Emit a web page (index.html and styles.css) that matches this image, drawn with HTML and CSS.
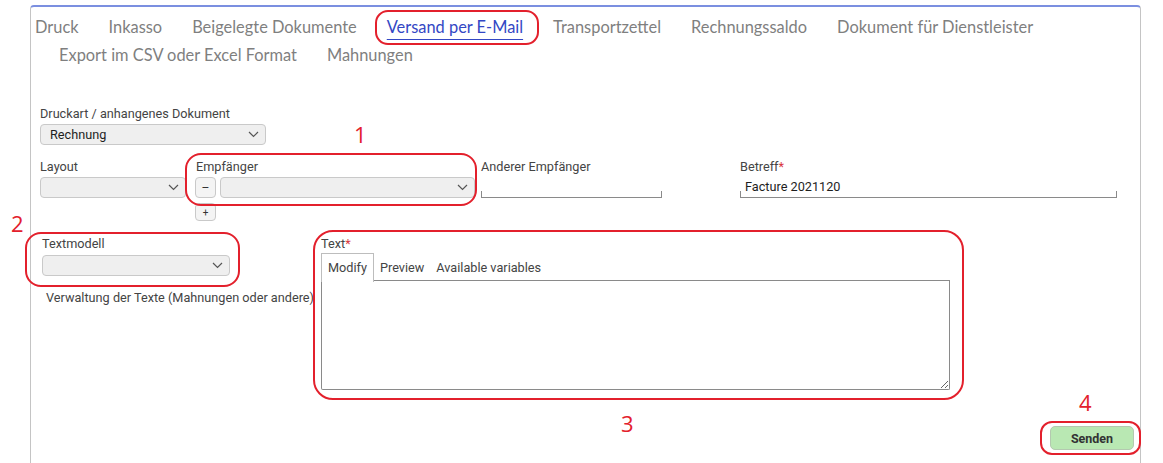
FILE: index.html
```html
<!DOCTYPE html>
<html lang="de">
<head>
  <meta charset="UTF-8" />
  <title>Versand per E-Mail</title>
  <link rel="stylesheet" href="styles.css">
</head>
<body>
<div class="page">

  <div class="panel">
    <!-- Reiter oben -->
    <nav class="tabs">
      <span class="tab">Druck</span>
      <span class="tab">Inkasso</span>
      <span class="tab">Beigelegte Dokumente</span>
      <span class="tab active">Versand per E-Mail</span>
      <span class="tab">Transportzettel</span>
      <span class="tab">Rechnungssaldo</span>
      <span class="tab">Dokument für Dienstleister</span>
      <span class="tab">Export im CSV oder Excel Format</span>
      <span class="tab">Mahnungen</span>
    </nav>

    <div class="form">
      <div class="row row-a">
        <div class="field f-druckart">
          <label>Druckart / anhangenes Dokument</label>
          <div class="select"><span>Rechnung</span>
            <svg width="11" height="7" viewBox="0 0 11 7"><path d="M1 1l4.5 4.5L10 1" fill="none" stroke="#555" stroke-width="1.2"/></svg>
          </div>
        </div>
      </div>

      <div class="row row-b">
        <div class="field f-layout">
          <label>Layout</label>
          <div class="select"><span></span>
            <svg width="11" height="7" viewBox="0 0 11 7"><path d="M1 1l4.5 4.5L10 1" fill="none" stroke="#555" stroke-width="1.2"/></svg>
          </div>
        </div>
        <div class="field f-empf">
          <label>Empfänger</label>
          <div class="empf-line">
            <button class="mini">–</button>
            <div class="select"><span></span>
              <svg width="11" height="7" viewBox="0 0 11 7"><path d="M1 1l4.5 4.5L10 1" fill="none" stroke="#555" stroke-width="1.2"/></svg>
            </div>
          </div>
          <button class="mini plus">+</button>
        </div>
        <div class="field f-anderer">
          <label>Anderer Empfänger</label>
          <div class="line-input"></div>
        </div>
        <div class="field f-betreff">
          <label>Betreff<span class="req">*</span></label>
          <div class="line-input">Facture 2021120</div>
        </div>
      </div>

      <div class="row row-c">
        <div class="col-model">
          <label>Textmodell</label>
          <div class="select"><span></span>
            <svg width="11" height="7" viewBox="0 0 11 7"><path d="M1 1l4.5 4.5L10 1" fill="none" stroke="#555" stroke-width="1.2"/></svg>
          </div>
          <p class="hint">Verwaltung der Texte (Mahnungen oder andere)</p>
        </div>
        <div class="col-text">
          <label>Text<span class="req">*</span></label>
          <div class="editor-tabs">
            <span class="etab current">Modify</span>
            <span class="etab">Preview</span>
            <span class="etab">Available variables</span>
          </div>
          <textarea class="editor"></textarea>
        </div>
      </div>

      <div class="actions">
        <button class="send">Senden</button>
      </div>
    </div>
  </div>

  <!-- rote Markierungen -->
  <div class="mark m-tab"></div>
  <div class="mark m-empf"></div>
  <div class="mark m-model"></div>
  <div class="mark m-text"></div>
  <div class="mark m-send"></div>
  <span class="num n1">1</span>
  <span class="num n2">2</span>
  <span class="num n3">3</span>
  <span class="num n4">4</span>

</div>
</body>
</html>
```

FILE: styles.css
```css
body {
  margin: 0;
  background: #ffffff;
  font-family: Roboto, "Liberation Sans", sans-serif;
}

.page {
  position: relative;
  width: 1163px;
  height: 463px;
  overflow: hidden;
}

.panel {
  margin: 5px 22px 0 30px;
  height: 458px;
  box-sizing: border-box;
  border: 1px solid #c4c4c4;
  border-top: 2px solid #7b8fe0;
  border-bottom: none;
  border-radius: 4px 4px 0 0;
}

/* Reiter */
.tabs {
  display: flex;
  flex-wrap: wrap;
  row-gap: 5px;
  padding: 10px 0 0 1px;
  font-family: Lato, "Open Sans", sans-serif;
  font-size: 16.4px;
  color: #7f7f7f;
}

.tab {
  line-height: 20px;
  padding: 0 3px 3px 3px;
  margin-left: 24px;
}

.tab:first-child {
  margin-left: 0;
}

.tab.active {
  color: #3347c4;
  text-decoration: underline;
  text-decoration-thickness: 1px;
  text-underline-offset: 6px;
}

/* Formular */
.form {
  padding-left: 9px;
  margin-top: 38px;
  font-size: 12.7px;
  color: #444;
}

.row {
  display: flex;
  align-items: flex-start;
}

.row-b {
  margin-top: 14px;
}

.row-c {
  margin-top: 15px;
}

label {
  display: block;
  line-height: 16px;
  height: 16px;
  white-space: nowrap;
}

.req {
  color: #d9363e;
}

.select {
  margin-top: 2px;
  height: 21px;
  box-sizing: border-box;
  border: 1px solid #c9c9c9;
  border-radius: 4px;
  background: #efefef;
  display: flex;
  align-items: center;
  justify-content: space-between;
  padding: 0 6px 0 9px;
  color: #1e1e1e;
}

.f-druckart { width: 226px; }
.f-layout { width: 146px; margin-right: 9px; }
.f-empf { width: 280px; margin-right: 6px; }
.f-anderer { width: 181px; margin-right: 78px; }
.f-betreff { width: 377px; }

.f-empf label {
  padding-left: 1px;
}

.empf-line {
  display: flex;
  gap: 4px;
  margin-top: 2px;
}

.empf-line .select {
  flex: 1;
  margin-top: 0;
}

.mini {
  width: 21px;
  height: 21px;
  padding: 0;
  border: 1px solid #c9c9c9;
  border-radius: 4px;
  background: #f4f4f4;
  font-family: Roboto, sans-serif;
  font-size: 12px;
  color: #333;
  line-height: 18px;
}

.mini.plus {
  display: block;
  height: 18px;
  margin-top: 5px;
  font-size: 10px;
  line-height: 15px;
}

.line-input {
  margin-top: 2px;
  height: 21px;
  box-sizing: border-box;
  padding: 2px 5px 0 5px;
  border-bottom: 1px solid #8a8a8a;
  background:
    linear-gradient(#8a8a8a, #8a8a8a) left bottom / 1px 6px no-repeat,
    linear-gradient(#8a8a8a, #8a8a8a) right bottom / 1px 6px no-repeat;
  color: #1e1e1e;
}

.col-model {
  width: 279px;
  margin-left: 2px;
}

.col-model .select {
  width: 188px;
  margin-top: 3px;
}

.hint {
  margin: 14px 0 0 4px;
  line-height: 16px;
  white-space: nowrap;
}

.col-text {
  width: 629px;
}

.editor-tabs {
  display: flex;
  margin-top: 1px;
  border-bottom: 1px solid #8a8a8a;
  height: 28px;
  box-sizing: border-box;
}

.etab {
  padding: 0 6px;
  line-height: 26px;
  margin-top: 1px;
  border: 1px solid transparent;
  border-bottom: none;
  color: #444;
}

.etab.current {
  margin-top: 0;
  border-color: #bdbdbd;
  background: #fff;
  height: 28px;
  line-height: 27px;
}

.etab + .etab {
  padding: 0 5px;
}

.editor {
  display: block;
  width: 629px;
  height: 109px;
  box-sizing: border-box;
  margin: 0;
  border: 1px solid #8a8a8a;
  border-top: none;
  border-radius: 0 0 2px 2px;
  resize: both;
  outline: none;
}

.actions {
  display: flex;
  justify-content: flex-end;
  margin-top: 36px;
  padding-right: 6px;
}

.send {
  width: 84px;
  height: 24px;
  border: 1px solid #b4c9b0;
  border-radius: 5px;
  background: #b9e8b3;
  font-family: Roboto, sans-serif;
  font-weight: bold;
  font-size: 12.5px;
  color: #333;
}

/* rote Markierungen */
.mark {
  position: absolute;
  box-sizing: border-box;
  border: 2px solid #e3202c;
}

.m-tab { left: 375px; top: 10px; width: 164px; height: 35px; border-radius: 13px; }
.m-empf { left: 185px; top: 153px; width: 292px; height: 53px; border-radius: 16px; }
.m-model { left: 25px; top: 232px; width: 215px; height: 55px; border-radius: 16px; }
.m-text { left: 313px; top: 230px; width: 651px; height: 170px; border-radius: 20px; }
.m-send { left: 1040px; top: 421px; width: 101px; height: 34px; border-radius: 12px; }

.num {
  position: absolute;
  font-family: "Open Sans", sans-serif;
  font-size: 22px;
  line-height: 24px;
  color: #e3202c;
}

.n1 { left: 354px; top: 122px; }
.n2 { left: 11px; top: 211px; }
.n3 { left: 621px; top: 411px; }
.n4 { left: 1079px; top: 390px; }
```
